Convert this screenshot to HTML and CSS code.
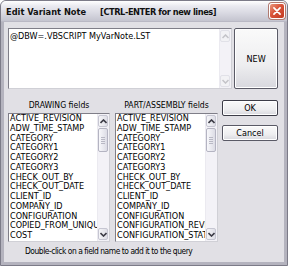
FILE: index.html
```html
<!DOCTYPE html>
<html>
<head>
<meta charset="utf-8">
<link rel="stylesheet" href="styles.css">
</head>
<body>
<div class="window">
  <div class="titlebar">
    <span class="title">Edit Variant Note</span>
    <span class="title2">[CTRL-ENTER for new lines]</span>
    <span class="close"><svg width="16" height="16" viewBox="0 0 16 16"><path d="M4.5 4.5 L11.5 11.5 M11.5 4.5 L4.5 11.5" stroke="#fff" stroke-width="2" stroke-linecap="round"/></svg></span>
  </div>
  <div class="client">
    <div class="top">
      <div class="edit">
        <div class="edit-text">@DBW=.VBSCRIPT MyVarNote.LST</div>
        <div class="vscroll off">
          <div class="arrow"><svg width="7" height="5" viewBox="0 0 7 5"><path d="M0.5 4 L3.5 1 L6.5 4" fill="none" stroke="#c3c3c8" stroke-width="1.5"/></svg></div>
          <div class="track"></div>
          <div class="arrow"><svg width="7" height="5" viewBox="0 0 7 5"><path d="M0.5 1 L3.5 4 L6.5 1" fill="none" stroke="#c3c3c8" stroke-width="1.5"/></svg></div>
        </div>
      </div>
      <div class="btn new">NEW</div>
    </div>
    <div class="middle">
      <div class="col c1">
        <div class="label">DRAWING fields</div>
        <div class="list">
          <div class="items">
            <div>ACTIVE_REVISION</div><div>ADW_TIME_STAMP</div><div>CATEGORY</div><div>CATEGORY1</div><div>CATEGORY2</div><div>CATEGORY3</div><div>CHECK_OUT_BY</div><div>CHECK_OUT_DATE</div><div>CLIENT_ID</div><div>COMPANY_ID</div><div>CONFIGURATION</div><div>COPIED_FROM_UNIQUE_ID</div><div>COST</div>
          </div>
          <div class="vscroll">
            <div class="arrow"><svg width="7" height="5" viewBox="0 0 7 5"><path d="M0.5 4 L3.5 1 L6.5 4" fill="none" stroke="#3c3c46" stroke-width="1.6"/></svg></div>
            <div class="thumb"><span></span><span></span><span></span><span></span></div>
            <div class="track"></div>
            <div class="arrow"><svg width="7" height="5" viewBox="0 0 7 5"><path d="M0.5 1 L3.5 4 L6.5 1" fill="none" stroke="#3c3c46" stroke-width="1.6"/></svg></div>
          </div>
        </div>
      </div>
      <div class="col c2">
        <div class="label">PART/ASSEMBLY fields</div>
        <div class="list">
          <div class="items">
            <div>ACTIVE_REVISION</div><div>ADW_TIME_STAMP</div><div>CATEGORY</div><div>CATEGORY1</div><div>CATEGORY2</div><div>CATEGORY3</div><div>CHECK_OUT_BY</div><div>CHECK_OUT_DATE</div><div>CLIENT_ID</div><div>COMPANY_ID</div><div>CONFIGURATION</div><div>CONFIGURATION_REVISION</div><div>CONFIGURATION_STATE</div>
          </div>
          <div class="vscroll">
            <div class="arrow"><svg width="7" height="5" viewBox="0 0 7 5"><path d="M0.5 4 L3.5 1 L6.5 4" fill="none" stroke="#3c3c46" stroke-width="1.6"/></svg></div>
            <div class="thumb"><span></span><span></span><span></span><span></span></div>
            <div class="track"></div>
            <div class="arrow"><svg width="7" height="5" viewBox="0 0 7 5"><path d="M0.5 1 L3.5 4 L6.5 1" fill="none" stroke="#3c3c46" stroke-width="1.6"/></svg></div>
          </div>
        </div>
      </div>
      <div class="btns">
        <div class="btn ok">OK</div>
        <div class="btn">Cancel</div>
      </div>
    </div>
    <div class="hint">Double-click on a field name to add it to the query</div>
  </div>
</div>
</body>
</html>
```
FILE: styles.css
```css
* { box-sizing: border-box; }
html, body { margin: 0; padding: 0; }
body {
  width: 288px;
  height: 266px;
  overflow: hidden;
  background: #fff;
  font-family: "DejaVu Sans Condensed", "DejaVu Sans", sans-serif;
  font-stretch: condensed;
  color: #000;
}
.window {
  width: 288px;
  height: 266px;
  display: flex;
  flex-direction: column;
  background: #b4b3be;
  border-radius: 6px 6px 0 0;
  border: 1px solid #7c7b88;
  overflow: hidden;
}
.titlebar {
  height: 21px;
  flex: none;
  display: flex;
  align-items: center;
  padding: 0 2px 0 5px;
  background: linear-gradient(#ffffff 0%, #eaeaf0 25%, #d9d9e2 60%, #c4c4cf 100%);
  border-bottom: 1px solid #b9b8c4;
}
.title {
  font-weight: bold;
  font-size: 9.2px;
  color: #111;
}
.title2 {
  font-weight: bold;
  font-size: 9.2px;
  letter-spacing: -0.45px;
  margin-left: 14px;
  color: #111;
}
.close {
  margin-left: auto;
  width: 16px;
  height: 16px;
  border-radius: 3px;
  border: 1px solid #fff;
  background: linear-gradient(135deg, #e9977d 0%, #d9543a 45%, #c23a22 100%);
  box-shadow: 0 0 0 1px #b07a70;
  display: flex;
  align-items: center;
  justify-content: center;
}
.close svg { display: block; }
.client {
  flex: 1;
  margin: 0 3px 3px 3px;
  background: #e1e0e5;
  padding: 6px 6px 0 4px;
  display: flex;
  flex-direction: column;
}
.top {
  display: flex;
  gap: 2px;
  height: 61px;
}
.edit {
  width: 225px;
  background: #fff;
  border: 1px solid #7f7e88;
  border-right-color: #d0d0d6;
  border-bottom-color: #d0d0d6;
  display: flex;
}
.edit-text {
  flex: 1;
  font-size: 9px;
  padding: 2px 0 0 1px;
  line-height: 11px;
}
.vscroll {
  width: 12px;
  display: flex;
  flex-direction: column;
  background: #f3f2f7;
  border-left: 1px solid #ebeaf0;
}
.vscroll .arrow {
  height: 12px;
  flex: none;
  margin: 1px 1px 0 0;
  border: 1px solid #c6c6d2;
  border-radius: 2px;
  background: linear-gradient(90deg, #f5f5f8, #dedee6);
  display: flex;
  align-items: center;
  justify-content: center;
}
.vscroll .arrow:last-child { margin: 0 1px 1px 0; }
.vscroll.off .arrow {
  background: #f2f2f5;
  border-color: #e1e1e8;
}
.vscroll .track { flex: 1; }
.vscroll .thumb {
  height: 24px;
  flex: none;
  margin: 1px 1px 0 0;
  border: 1px solid #b4b4c2;
  border-radius: 2px;
  background: linear-gradient(90deg, #f8f8fb, #dcdce5);
  display: flex;
  flex-direction: column;
  align-items: center;
  justify-content: center;
  gap: 1px;
}
.vscroll .thumb span {
  display: block;
  width: 4px;
  height: 1px;
  background: #b8b8c4;
}
.btn {
  border: 1px solid #5a5a66;
  border-radius: 2px;
  background: linear-gradient(#fafafa 0%, #eeeef0 60%, #d8d8de 100%);
  box-shadow: inset 0 0 0 1px #fff;
  display: flex;
  align-items: center;
  justify-content: center;
  font-size: 9px;
  color: #000;
}
.btn.new {
  width: 44px;
}
.middle {
  display: flex;
  margin-top: 11px;
}
.col {
  display: flex;
  flex-direction: column;
}
.c1 { width: 102px; }
.c2 { width: 103px; margin-left: 5px; }
.label {
  height: 13px;
  font-size: 8.6px;
  line-height: 10px;
  text-align: center;
}
.list {
  height: 129px;
  background: #fff;
  border: 1px solid #7f7e88;
  border-right-color: #d0d0d6;
  border-bottom-color: #d0d0d6;
  display: flex;
}
.items {
  flex: 1;
  overflow: hidden;
  font-size: 9px;
  line-height: 9.75px;
  padding: 0 0 0 1px;
  white-space: nowrap;
}
.btns {
  margin-left: 4px;
  width: 56px;
  display: flex;
  flex-direction: column;
  gap: 9px;
  padding-top: 0;
}
.btns .btn { height: 16px; }
.btn.ok { border-color: #3d3d48; }
.hint {
  margin-top: 4px;
  font-size: 8.4px;
  letter-spacing: -0.45px;
  line-height: 10px;
  padding-left: 17px;
}
```
